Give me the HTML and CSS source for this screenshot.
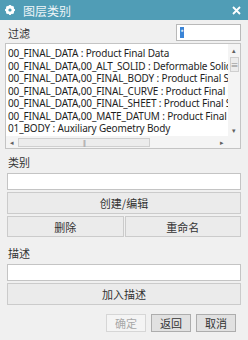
FILE: index.html
```html
<!DOCTYPE html>
<html lang="zh">
<head>
  <meta charset="UTF-8"/>
  <title>图层类别</title>
  <link rel="stylesheet" href="styles.css">
</head>
<body>
  <div class="dialog">
    <div class="titlebar">
      <svg class="gear" width="10" height="10" viewBox="0 0 10 10">
        <circle cx="5" cy="5" r="3.3" fill="none" stroke="#fff" stroke-width="2.2"/>
        <g stroke="#fff" stroke-width="1.8">
          <line x1="5" y1="0" x2="5" y2="10"/>
          <line x1="0" y1="5" x2="10" y2="5"/>
          <line x1="1.5" y1="1.5" x2="8.5" y2="8.5"/>
          <line x1="8.5" y1="1.5" x2="1.5" y2="8.5"/>
        </g>
        <circle cx="5" cy="5" r="1.6" fill="#4f9db5"/>
      </svg>
      <span class="title">图层类别</span>
      <svg class="close" width="9" height="9" viewBox="0 0 9 9">
        <path d="M1 1L8 8M8 1L1 8" stroke="#fff" stroke-width="1.8"/>
      </svg>
    </div>

    <div class="content">
      <div class="filter-row">
        <span class="label">过滤</span>
        <div class="filter-input"><span class="sel">*</span></div>
      </div>

      <div class="listbox">
        <div class="list-main">
          <div class="items">
            <div>00_FINAL_DATA : Product Final Data</div>
            <div>00_FINAL_DATA,00_ALT_SOLID : Deformable Solid</div>
            <div>00_FINAL_DATA,00_FINAL_BODY : Product Final Solid Body</div>
            <div>00_FINAL_DATA,00_FINAL_CURVE : Product Final Curve</div>
            <div>00_FINAL_DATA,00_FINAL_SHEET : Product Final Sheet</div>
            <div>00_FINAL_DATA,00_MATE_DATUM : Product Final Datum</div>
            <div>01_BODY : Auxiliary Geometry Body</div>
          </div>
          <div class="vscroll">
            <span class="arrow">&#9652;</span>
            <div class="vthumb"><span>≡</span></div>
            <span class="spacer"></span>
            <span class="arrow">&#9662;</span>
          </div>
        </div>
        <div class="hscroll">
          <span class="arrow">&#9666;</span>
          <div class="hthumb">|||</div>
          <span class="spacer"></span>
          <span class="arrow">&#9656;</span>
          <span class="corner"></span>
        </div>
      </div>

      <div class="section-label">类别</div>
      <div class="textbox"></div>
      <button class="btn wide">创建/编辑</button>
      <div class="btn-row">
        <button class="btn">删除</button>
        <button class="btn">重命名</button>
      </div>

      <div class="section-label second">描述</div>
      <div class="textbox"></div>
      <button class="btn wide">加入描述</button>

      <div class="footer">
        <button class="fbtn disabled">确定</button>
        <button class="fbtn">返回</button>
        <button class="fbtn">取消</button>
      </div>
    </div>
  </div>
</body>
</html>
```

FILE: styles.css
```css
/* Window */
body {
  margin:0; padding:0;
  width:248px; height:340px; overflow:hidden;
  font-family:"Noto Sans","Noto Sans CJK SC",sans-serif;
  font-size:11px; color:#222;
  background:#f0f0f0;
}
.dialog {
  width:248px; height:340px;
  box-sizing:border-box;
  display:flex; flex-direction:column;
}
.titlebar {
  height:20px; flex:none;
  background:#509db6; color:#eef5f8;
  display:flex; align-items:center;
  padding:0 7px 0 5px;
}
.gear { flex:none; }
.title {
  margin-left:8px; font-size:12px;
  font-family:"Noto Sans CJK SC",sans-serif;
}
.close { margin-left:auto; }

/* Content */
.content {
  flex:1;
  padding:0 7px 0 7px;
  display:flex; flex-direction:column;
  font-family:"Noto Sans CJK SC",sans-serif;
  color:#333;
}
.filter-row {
  display:flex; align-items:center; justify-content:space-between;
  margin-top:4px; height:17px;
}
.label { padding-left:1px; }
.filter-input {
  width:60px; height:15px;
  border:1px solid #b9b9b9; background:#fff;
  display:flex; align-items:center; padding-left:3px;
}
.sel {
  background:#3a84d6; color:#fff; width:4px; height:11px;
  font-size:8px; line-height:11px; text-align:center;
}

/* List */
.listbox {
  margin:2px 0 0 -2px; height:104px;
  border:1px solid #c4c4c4; background:#fff;
  display:flex; flex-direction:column;
}
.list-main { flex:1; display:flex; min-height:0; }
.items {
  flex:1; overflow:hidden;
  padding:3px 0 0 2px;
  font-family:"Noto Sans",sans-serif;
  font-size:10px; line-height:12.5px; letter-spacing:-0.15px;
  white-space:nowrap; color:#1e1e1e;
}
.vscroll {
  width:12px; flex:none; background:#f4f4f4;
  display:flex; flex-direction:column; align-items:center;
}
.arrow { font-size:7px; color:#606060; height:12px; line-height:12px; text-align:center; width:12px; }
.vthumb {
  width:9px; height:15px; margin-top:1px;
  border:1px solid #cfcfcf; background:#ececec; box-sizing:border-box;
  font-size:8px; line-height:13px; text-align:center; color:#888;
}
.spacer { flex:1; }
.hscroll {
  height:12px; flex:none; background:#f4f4f4;
  display:flex; align-items:center;
}
.hthumb {
  width:132px; height:9px; margin-left:0;
  border:1px solid #cfcfcf; background:#ececec; box-sizing:border-box;
  font-size:6px; line-height:7px; text-align:center; color:#888; letter-spacing:-1px;
}
.corner { width:12px; height:12px; background:#f4f4f4; }

/* Form */
.section-label { margin-top:6px; height:14px; line-height:14px; padding-left:1px; }
.section-label.second { margin-top:9px; }
.textbox {
  margin-top:4px; height:15px;
  border:1px solid #c4c4c4; background:#fff;
}
.btn {
  font-family:"Noto Sans CJK SC",sans-serif; font-size:11px; color:#333;
  background:#ebebeb; border:1px solid #cbcbcb;
  margin:0; padding:0;
}
.btn.wide { margin-top:2px; height:22px; }
.btn-row {
  display:grid; grid-template-columns:1fr 1fr; gap:1px;
  margin-top:2px; height:21px;
}
.footer {
  display:flex; justify-content:flex-end; gap:5px;
  margin-top:9px; padding-right:5px;
}
.fbtn {
  width:40px; height:18px; margin:0; padding:0;
  font-family:"Noto Sans CJK SC",sans-serif; font-size:11px; color:#333;
  background:#e1e1e1; border:1px solid #adadad;
}
.fbtn.disabled { background:#f4f4f4; border-color:#d6d6d6; color:#a8a8a8; }
```
